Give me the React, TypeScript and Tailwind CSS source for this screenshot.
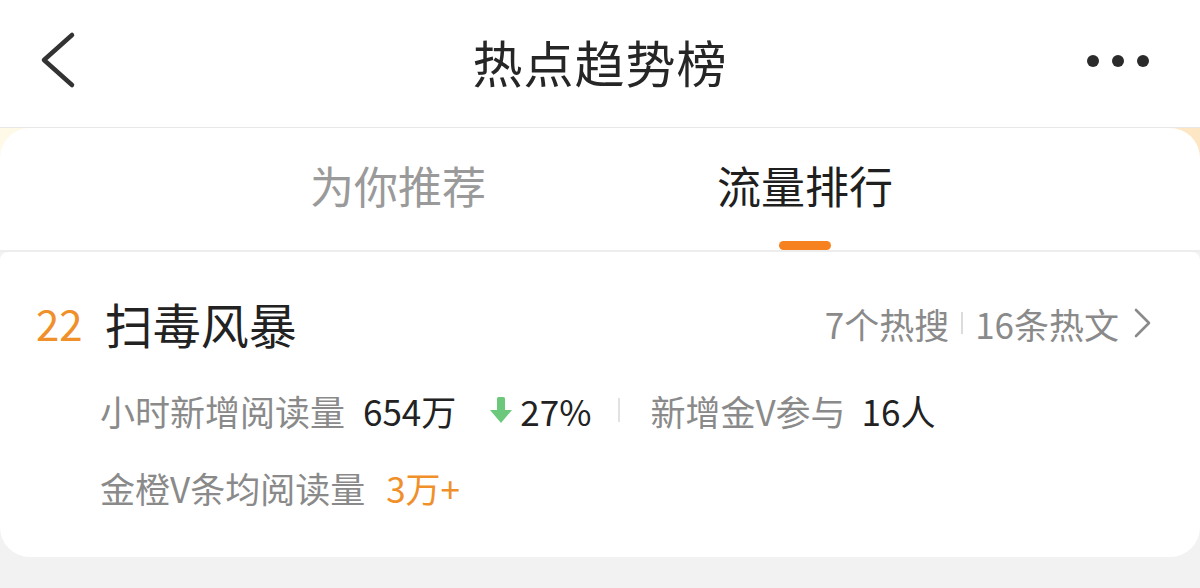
export default function App() {
  return (
    <div
      className="w-[1200px] h-[588px] overflow-hidden bg-[#f2f2f2]"
      style={{ fontFamily: '"Noto Sans CJK SC", "Noto Sans", sans-serif' }}
    >
      {/* top bar */}
      <div className="h-[128px] pb-[5px] bg-white border-b border-[#e8e8e8] flex items-center">
        <div className="w-[160px] pl-[40px] flex items-center">
          <svg width="40" height="60" viewBox="0 0 40 60" fill="none">
            <polyline
              points="32,4 4,29 32,54"
              stroke="#333"
              strokeWidth="4.5"
              strokeLinecap="round"
              strokeLinejoin="round"
            />
          </svg>
        </div>
        <div className="flex-1 text-center text-[50px] leading-none text-[#262626] tracking-[1px]">
          热点趋势榜
        </div>
        <div className="w-[160px] pr-[51px] flex justify-end gap-[13px]">
          <span className="w-[12px] h-[12px] rounded-full bg-[#2b2b2b]" />
          <span className="w-[12px] h-[12px] rounded-full bg-[#2b2b2b]" />
          <span className="w-[12px] h-[12px] rounded-full bg-[#2b2b2b]" />
        </div>
      </div>

      {/* tabs */}
      <div className="bg-gradient-to-r from-[#fff9e8] via-[#fff6ea] to-[#fde6c4]">
        <div className="h-[124px] bg-white rounded-t-[30px] border-b-2 border-[#ededed] flex">
          <div className="ml-[310px] w-[176px] flex flex-col items-center">
            <div className="mt-[35px] text-[44px] leading-[44px] text-[#9a9a9a]">为你推荐</div>
          </div>
          <div className="ml-[231px] w-[176px] flex flex-col items-center">
            <div className="mt-[35px] text-[44px] leading-[44px] text-[#1f1f1f]">流量排行</div>
            <div className="mt-[34px] w-[52px] h-[9px] rounded-full bg-[#f5821f]" />
          </div>
        </div>
      </div>

      {/* card */}
      <div className="h-[305px] bg-white rounded-t-[8px] rounded-b-[30px] pt-[46px] flex flex-col">
        <div className="h-[50px] flex items-center pr-[47px]">
          <span className="ml-[36px] text-[42px] leading-none text-[#f0902a]">22</span>
          <span className="ml-[22px] text-[48px] leading-none text-[#222]">扫毒风暴</span>
          <div className="ml-auto flex items-center text-[35px] leading-none text-[#8a8a8a]">
            <span>7个热搜</span>
            <span className="mx-[12px] w-[2px] h-[22px] bg-[#dcdcdc]" />
            <span>16条热文</span>
            <svg className="ml-[14px]" width="20" height="30" viewBox="0 0 20 30" fill="none">
              <polyline
                points="3,2 16,15 3,28"
                stroke="#8a8a8a"
                strokeWidth="2.6"
                strokeLinecap="round"
                strokeLinejoin="round"
              />
            </svg>
          </div>
        </div>

        <div className="mt-[40px] h-[44px] pl-[100px] flex items-center text-[35px] leading-none">
          <span className="text-[#8a8a8a]">小时新增阅读量</span>
          <span className="ml-[18px] text-[#222]">654万</span>
          <svg className="ml-[33px]" width="24" height="28" viewBox="0 0 24 28">
            <rect x="8" y="1" width="8" height="15" rx="1.5" fill="#6cc97c" />
            <polygon points="1,14 23,14 12,27" fill="#6cc97c" />
          </svg>
          <span className="ml-[7px] text-[#222]">27%</span>
          <span className="ml-[27px] w-[2px] h-[24px] bg-[#e2e2e2]" />
          <span className="ml-[30px] text-[#8a8a8a]">新增金V参与</span>
          <span className="ml-[16px] text-[#222]">16人</span>
        </div>

        <div className="mt-[33px] h-[44px] pl-[100px] flex items-center text-[35px] leading-none">
          <span className="text-[#8a8a8a]">金橙V条均阅读量</span>
          <span className="ml-[21px] text-[#f0902a]">3万+</span>
        </div>
      </div>
    </div>
  );
}
